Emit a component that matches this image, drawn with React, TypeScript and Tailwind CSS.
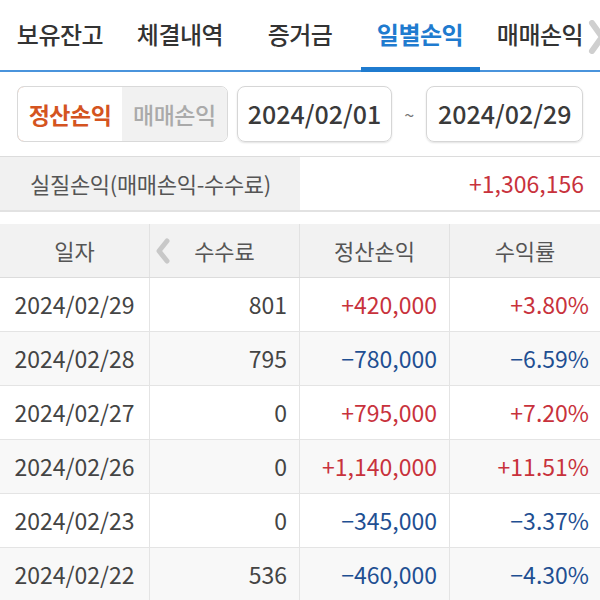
import React from 'react'

const tabs = ['보유잔고', '체결내역', '증거금', '일별손익', '매매손익']

const rows = [
  { date: '2024/02/29', fee: '801', pl: '+420,000', rate: '+3.80%' },
  { date: '2024/02/28', fee: '795', pl: '−780,000', rate: '−6.59%' },
  { date: '2024/02/27', fee: '0', pl: '+795,000', rate: '+7.20%' },
  { date: '2024/02/26', fee: '0', pl: '+1,140,000', rate: '+11.51%' },
  { date: '2024/02/23', fee: '0', pl: '−345,000', rate: '−3.37%' },
  { date: '2024/02/22', fee: '536', pl: '−460,000', rate: '−4.30%' },
]

export default function App() {
  return (
    <div
      className="w-[600px] h-[600px] overflow-hidden bg-white text-[#444]"
      style={{ fontFamily: '"Noto Sans CJK KR", "Noto Sans", sans-serif' }}
    >
      {/* top tabs */}
      <div className="relative h-[72px] border-b-2 border-[#4a94dc]">
        <div className="flex h-[70px]">
          {tabs.map((t, i) => (
            <div
              key={t}
              className={
                i === 3
                  ? 'relative w-[120px] flex items-center justify-center text-[24px] font-bold text-[#1f7bcf] tracking-[-0.5px]'
                  : 'relative w-[120px] flex items-center justify-center text-[24px] font-medium text-[#333] tracking-[-0.5px]'
              }
            >
              <span className="-mt-[2px]">{t}</span>
              {i === 3 && <div className="absolute left-[1px] right-0 bottom-[-2px] h-[5px] bg-[#1f7bcf]" />}
            </div>
          ))}
        </div>
        <svg className="absolute right-[-6px] top-[20px]" width="18" height="34" viewBox="0 0 18 34">
          <path d="M4 3 L14 17 L4 31" fill="none" stroke="#cfcfcf" strokeWidth="6" strokeLinecap="round" strokeLinejoin="round" />
        </svg>
      </div>

      {/* filter row */}
      <div className="flex items-center h-[85px] px-[17px] border-b border-[#dcdcdc]">
        <div className="flex h-[56px] w-[211px] rounded-[7px] border border-[#d9d9d9] overflow-hidden">
          <div className="w-[106px] flex items-center justify-center rounded-l-[7px] border border-[#c9835e] -m-px bg-white text-[23px] font-bold text-[#d4541f] tracking-[-0.5px]">
            정산손익
          </div>
          <div className="flex-1 flex items-center justify-center bg-[#f1f1f1] text-[23px] font-medium text-[#aaaaaa] tracking-[-0.5px]">
            매매손익
          </div>
        </div>
        <div className="ml-[9px] flex items-center justify-center h-[56px] w-[156px] rounded-[8px] border border-[#d6d6d6] shadow-[0_1px_2px_rgba(0,0,0,0.12)] text-[25px] font-medium text-[#3a3a3a]">
          2024/02/01
        </div>
        <div className="w-[34px] text-center text-[18px] text-[#777]">~</div>
        <div className="flex items-center justify-center h-[56px] w-[157px] rounded-[8px] border border-[#d6d6d6] shadow-[0_1px_2px_rgba(0,0,0,0.12)] text-[25px] font-medium text-[#3a3a3a]">
          2024/02/29
        </div>
      </div>

      {/* summary */}
      <div className="flex h-[55px] border-b-2 border-[#e2e2e2]">
        <div className="w-[300px] bg-[#f1f1f1] flex items-center pl-[30px] text-[22px] text-[#555] tracking-[-0.3px]">
          실질손익(매매손익-수수료)
        </div>
        <div className="flex-1 flex items-center justify-end pr-[16px] text-[23px] text-[#c8323c]">
          +1,306,156
        </div>
      </div>

      {/* table */}
      <div className="mt-[12px]">
        <div className="grid grid-cols-4 h-[54px] bg-[#f2f2f2] border-b border-[#dcdcdc] text-[22px] text-[#555]">
          <div className="flex items-center justify-center border-r border-[#e2e2e2]">일자</div>
          <div className="relative flex items-center justify-center border-r border-[#e2e2e2]">
            <svg className="absolute left-[4px] top-[14px]" width="18" height="26" viewBox="0 0 18 26">
              <path d="M13 3 L5 13 L13 23" fill="none" stroke="#c8c8c8" strokeWidth="5" strokeLinecap="round" strokeLinejoin="round" />
            </svg>
            수수료
          </div>
          <div className="flex items-center justify-center border-r border-[#e2e2e2]">정산손익</div>
          <div className="flex items-center justify-center">수익률</div>
        </div>
        {rows.map((r, i) => {
          const up = r.pl.startsWith('+')
          const color = up ? 'text-[#c8323c]' : 'text-[#1f4f92]'
          return (
            <div
              key={r.date}
              className={
                i % 2 === 1
                  ? 'grid grid-cols-4 h-[54px] bg-[#f8f8f8] border-b border-[#e4e4e4] text-[23px]'
                  : 'grid grid-cols-4 h-[54px] bg-white border-b border-[#e4e4e4] text-[23px]'
              }
            >
              <div className="flex items-center justify-center border-r border-[#e4e4e4] text-[#444]">{r.date}</div>
              <div className="flex items-center justify-end pr-[12px] border-r border-[#e4e4e4] text-[#444]">{r.fee}</div>
              <div className={'flex items-center justify-end pr-[12px] border-r border-[#e4e4e4] ' + color}>{r.pl}</div>
              <div className={'flex items-center justify-end pr-[11px] ' + color}>{r.rate}</div>
            </div>
          )
        })}
      </div>
    </div>
  )
}
